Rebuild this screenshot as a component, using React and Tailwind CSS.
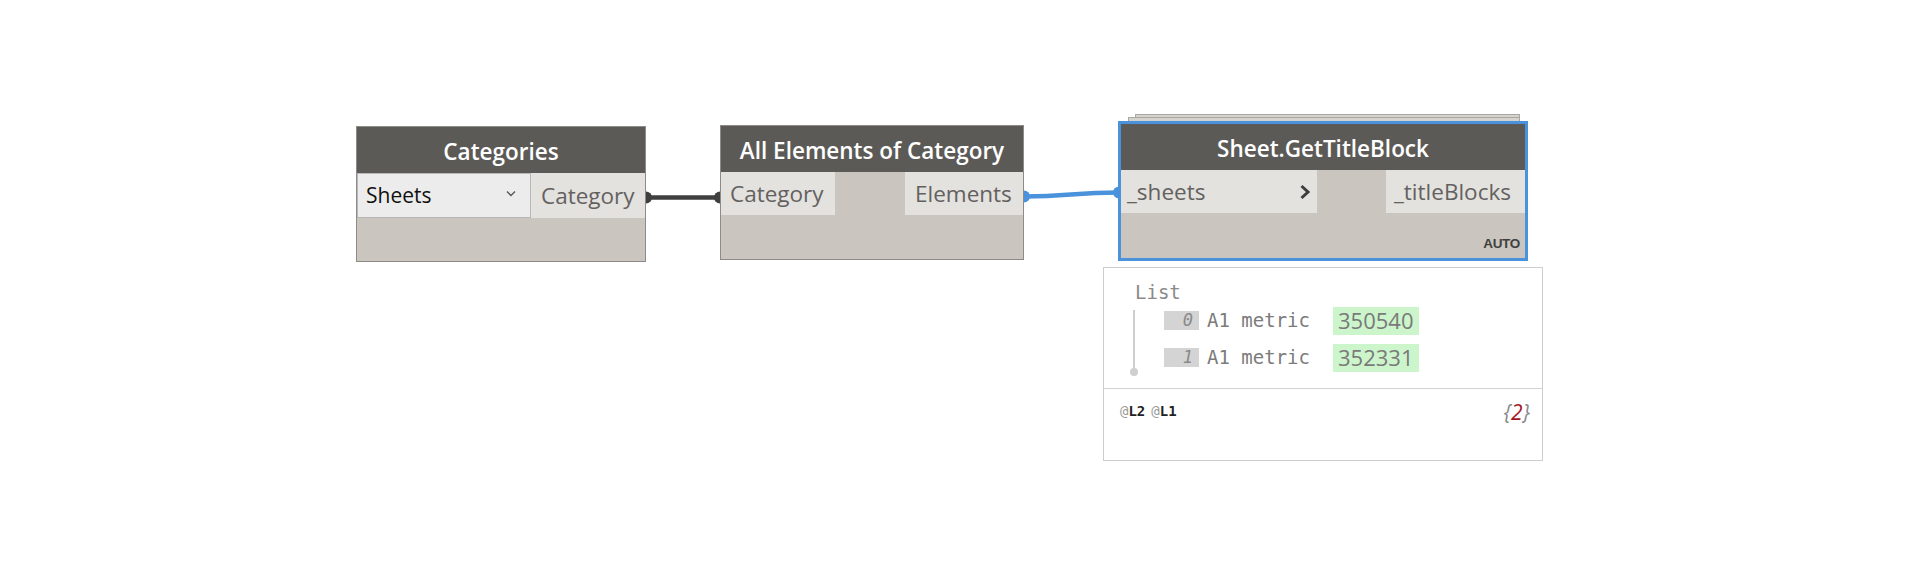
import React from 'react';

const sans = "font-['Open_Sans',_'Noto_Sans',_sans-serif]";
const mono = "font-['DejaVu_Sans_Mono',_'Liberation_Mono',_monospace]";

function Port({ label, className = '', children }) {
  return (
    <div className={`flex items-center bg-[#e4e2de] text-[#636160] text-[22.5px] ${className}`}>
      {label}
      {children}
    </div>
  );
}

function Header({ title }) {
  return (
    <div className="h-[46px] shrink-0 bg-[#5c5a57] flex items-center justify-center pt-[4px] text-white text-[22.5px] font-semibold">
      {title}
    </div>
  );
}

function Wires() {
  return (
    <svg className="absolute inset-0 pointer-events-none" width="1920" height="571">
      {/* Categories -> All Elements of Category */}
      <line x1="646" y1="197.5" x2="720" y2="197.5" stroke="#3f3f3f" strokeWidth="4.5" />
      <path d="M646 191.5 a6 6 0 0 1 0 12 z" fill="#3f3f3f" />
      <path d="M720 191.5 a6 6 0 0 0 0 12 z" fill="#3f3f3f" />
      {/* All Elements of Category -> Sheet.GetTitleBlock */}
      <path d="M1024 196.5 C1070 196.5 1072 192.5 1119 192.5" stroke="#4a93dc" strokeWidth="4.5" fill="none" />
      <path d="M1024 190.5 a6 6 0 0 1 0 12 z" fill="#4a93dc" />
      <path d="M1119 186.5 a6 6 0 0 0 0 12 z" fill="#4a93dc" />
    </svg>
  );
}

function CategoriesNode() {
  return (
    <div className={`absolute left-[356px] top-[126px] w-[290px] h-[136px] border border-[#8d8b88] bg-[#cac5be] flex flex-col ${sans}`}>
      <Header title="Categories" />
      <div className="flex h-[45px] shrink-0">
        <div className="w-[174px] flex items-center justify-between bg-[#ececec] border border-[#b7b7b7] pl-[8px] pr-[14px] text-[21px] text-[#111]">
          <span>Sheets</span>
          <svg width="10" height="7" viewBox="0 0 10 7" className="mt-[-4px]">
            <path d="M1 1.5 L5 5.5 L9 1.5" stroke="#555" strokeWidth="1.3" fill="none" />
          </svg>
        </div>
        <Port label="Category" className="flex-1 pl-[10px]" />
      </div>
    </div>
  );
}

function AllElementsNode() {
  return (
    <div className={`absolute left-[720px] top-[125px] w-[304px] h-[135px] border border-[#8d8b88] bg-[#cac5be] flex flex-col ${sans}`}>
      <Header title="All Elements of Category" />
      <div className="flex justify-between h-[43px] shrink-0">
        <Port label="Category" className="w-[114px] pl-[9px]" />
        <Port label="Elements" className="w-[118px] pl-[10px]" />
      </div>
    </div>
  );
}

function TitleBlockNode() {
  return (
    <div className="absolute left-[1118px] top-[114px]">
      {/* stacked copies behind the node */}
      <div className="ml-[17px] mr-[8px] h-[3px] border-t border-x border-[#a9a7a4] bg-[#d6d2cc]" />
      <div className="ml-[10px] mr-[8px] h-[4px] border-t border-x border-[#a9a7a4] bg-[#d6d2cc]" />
      <div className={`w-[410px] h-[140px] border-[3px] border-[#4a93dc] bg-[#cac5be] flex flex-col ${sans}`}>
        <Header title="Sheet.GetTitleBlock" />
        <div className="flex justify-between h-[43px] shrink-0">
          <Port label="_sheets" className="w-[196px] pl-[6px] justify-between pr-[6px]">
            <svg width="12" height="16" viewBox="0 0 12 16">
              <path d="M2.5 2 L9 8 L2.5 14" stroke="#3d3d3d" strokeWidth="3" fill="none" />
            </svg>
          </Port>
          <Port label="_titleBlocks" className="w-[139px] pl-[8px]" />
        </div>
        <div className="flex-1 flex items-end justify-end pr-[5px] pb-[4px] text-[13.5px] font-bold tracking-[-0.3px] text-[#3f3f3f] font-['Liberation_Sans',_sans-serif]">
          AUTO
        </div>
      </div>
    </div>
  );
}

function ListRow({ index, name, value }) {
  return (
    <div className="flex items-center h-[37px]">
      <div className={`w-[35px] h-[19px] bg-[#d4d4d4] flex items-center justify-end pr-[6px] text-[17px] italic text-[#8a8a8a] ${mono}`}>
        {index}
      </div>
      <span className={`ml-[8px] w-[126px] text-[19px] text-[#7b7b7b] ${mono}`}>{name}</span>
      <div className={`w-[86px] h-[28px] bg-[#ccf5cc] flex items-center pl-[5px] text-[22px] text-[#7a7a7a] ${sans}`}>
        {value}
      </div>
    </div>
  );
}

function WatchPreview() {
  return (
    <div className="absolute left-[1103px] top-[267px] w-[440px] h-[194px] border border-[#cdcdcd] bg-white flex flex-col">
      <div className="h-[121px] shrink-0 border-b border-[#d3d3d3] pl-[29px] pt-[12px]">
        <div className={`text-[19px] leading-[24px] text-[#8a8a8a] ${mono} pl-[2px]`}>List</div>
        <div className="flex">
          {/* tree line with end dot */}
          <div className="relative w-[31px] h-[72px]">
            <div className="absolute left-0 top-[6px] w-[2px] h-[62px] bg-[#cfcfcf]" />
            <div className="absolute left-[-3px] top-[64px] w-[8px] h-[8px] rounded-full bg-[#cfcfcf]" />
          </div>
          <div className="flex flex-col -mt-[2px]">
            <ListRow index="0" name="A1 metric" value="350540" />
            <ListRow index="1" name="A1 metric" value="352331" />
          </div>
        </div>
      </div>
      <div className="flex items-start justify-between pl-[16px] pr-[12px] pt-[12px]">
        <div className={`text-[14px] font-bold text-[#222] ${mono} flex gap-[6px]`}>
          <span><span className="text-[#9a9a9a] font-normal">@</span>L2</span>
          <span><span className="text-[#9a9a9a] font-normal">@</span>L1</span>
        </div>
        <div className={`text-[21px] italic leading-[22px] ${sans}`}>
          <span className="text-[#8a8a8a]">{'{'}</span>
          <span className="text-[#a3181f]">2</span>
          <span className="text-[#8a8a8a]">{'}'}</span>
        </div>
      </div>
    </div>
  );
}

export default function App() {
  return (
    <div className="relative w-[1920px] h-[571px] bg-white overflow-hidden">
      <Wires />
      <CategoriesNode />
      <AllElementsNode />
      <TitleBlockNode />
      <WatchPreview />
    </div>
  );
}
